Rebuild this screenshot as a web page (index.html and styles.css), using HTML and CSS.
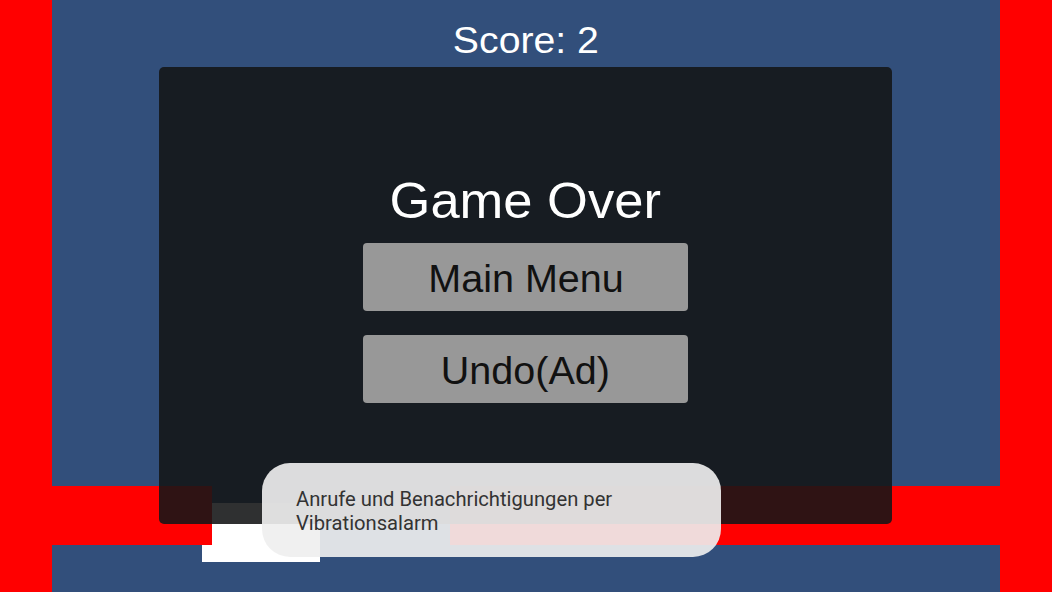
FILE: index.html
```html
<!DOCTYPE html>
<html>
<head>
<meta charset="utf-8">
<link rel="stylesheet" href="styles.css">
</head>
<body>
<div class="stage">
  <div class="side"></div>
  <div class="field">
    <div class="score"><span class="stretch s-score">Score: 2</span></div>
    <div class="band band-left"></div>
    <div class="band band-right"></div>
    <div class="white-block"></div>
    <div class="panel">
      <div class="title"><span class="stretch s-title">Game Over</span></div>
      <div class="btn"><span class="stretch s-btn">Main Menu</span></div>
      <div class="btn"><span class="stretch s-btn">Undo(Ad)</span></div>
    </div>
    <div class="toast">Anrufe und Benachrichtigungen per<br>Vibrationsalarm</div>
  </div>
  <div class="side"></div>
</div>
</body>
</html>
```
FILE: styles.css
```css
html, body {
  margin: 0;
  padding: 0;
  background: #324f7b;
}
.stage {
  display: flex;
  width: 1052px;
  height: 592px;
  overflow: hidden;
  font-family: "Liberation Sans", Arial, sans-serif;
}
.side {
  width: 52px;
  flex: none;
  background: #ff0000;
}
.field {
  flex: 1;
  position: relative;
  background: #324f7b;
}
.stretch {
  display: inline-block;
}
.score {
  padding-top: 21px;
  text-align: center;
  color: #ffffff;
  font-size: 37px;
  line-height: 40px;
}
.s-score { transform: scaleX(1.06); }
.band {
  position: absolute;
  z-index: 1;
  top: 486px;
  height: 59px;
  background: #ff0000;
}
.band-left { left: 0; width: 160px; }
.band-right { left: 398px; width: 550px; }
.white-block {
  position: absolute;
  z-index: 0;
  left: 150px;
  top: 503px;
  width: 118px;
  height: 59px;
  background: #ffffff;
}
.panel {
  position: absolute;
  z-index: 2;
  left: 107px;
  top: 67px;
  width: 733px;
  height: 457px;
  box-sizing: border-box;
  padding-top: 106px;
  border-radius: 5px;
  background: rgba(20, 21, 23, 0.885);
  display: flex;
  flex-direction: column;
  align-items: center;
}
.title {
  color: #ffffff;
  font-size: 50px;
  line-height: 56px;
  margin-bottom: 14px;
}
.s-title { transform: scaleX(1.05); }
.btn {
  width: 325px;
  height: 68px;
  box-sizing: border-box;
  padding-top: 4px;
  margin-bottom: 24px;
  border-radius: 4px;
  background: #989898;
  color: #111111;
  font-size: 38px;
  display: flex;
  align-items: center;
  justify-content: center;
}
.s-btn { transform: scaleX(1.04); }
.toast {
  position: absolute;
  z-index: 3;
  left: 210px;
  top: 463px;
  width: 459px;
  height: 94px;
  box-sizing: border-box;
  padding: 24px 16px 0 34px;
  border-radius: 28px;
  background: rgba(239, 239, 239, 0.913);
  color: #333333;
  font-family: Roboto, "Noto Sans", sans-serif;
  font-size: 20.2px;
  line-height: 24px;
}
```
